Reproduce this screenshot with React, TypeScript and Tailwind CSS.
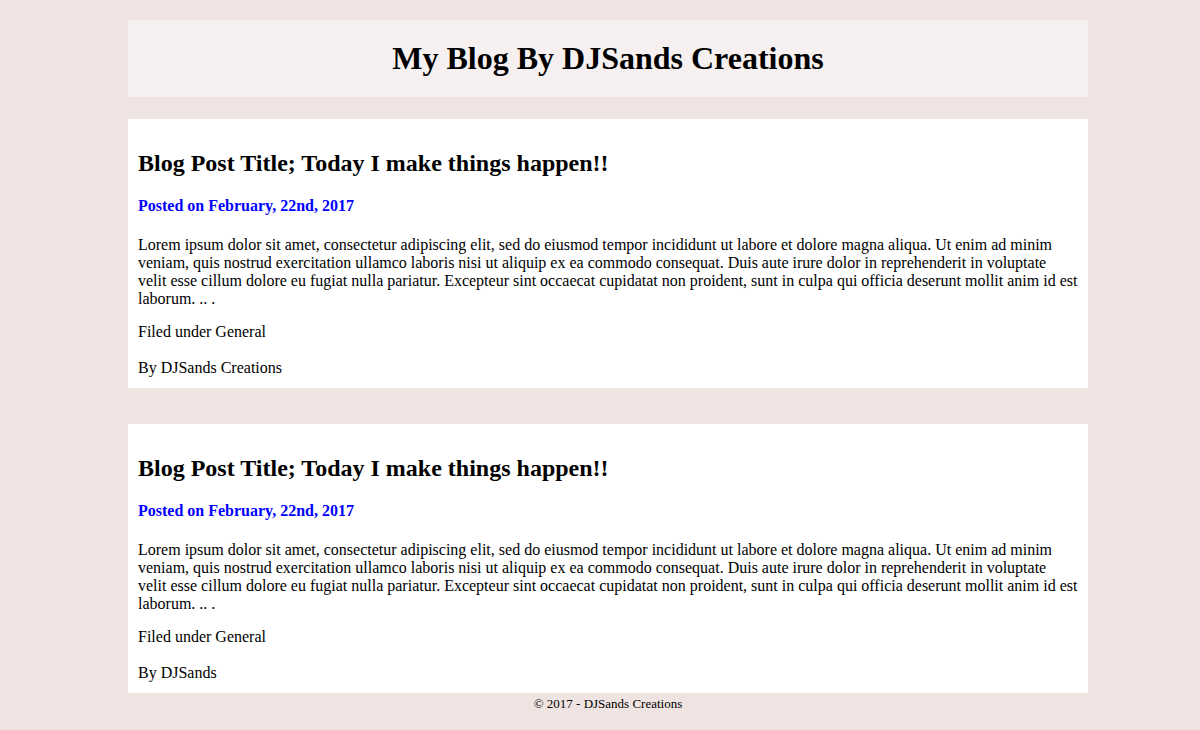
const posts = [
  { id: 1, author: 'By DJSands Creations' },
  { id: 2, author: 'By DJSands' },
]

const lorem =
  'Lorem ipsum dolor sit amet, consectetur adipiscing elit, sed do eiusmod tempor incididunt ut labore et dolore magna aliqua. Ut enim ad minim veniam, quis nostrud exercitation ullamco laboris nisi ut aliquip ex ea commodo consequat. Duis aute irure dolor in reprehenderit in voluptate velit esse cillum dolore eu fugiat nulla pariatur. Excepteur sint occaecat cupidatat non proident, sunt in culpa qui officia deserunt mollit anim id est laborum. .. .'

function Post({ author }: { author: string }) {
  return (
    <article className="bg-white px-[10px] pt-[30px] pb-[11px]">
      {/* Title */}
      <h2 className="text-[24px] leading-[28px] font-bold text-black">
        Blog Post Title; Today I make things happen!!
      </h2>
      <h4 className="mt-[20px] text-[16px] leading-[18px] font-bold text-[#0000ff]">
        Posted on February, 22nd, 2017
      </h4>

      {/* Body */}
      <p className="mt-[21px] text-[16px] leading-[18px] text-black">{lorem}</p>
      <p className="mt-[15px] text-[16px] leading-[18px] text-black">Filed under General</p>
      <p className="mt-[18px] text-[16px] leading-[18px] text-black">{author}</p>
    </article>
  )
}

export default function App() {
  return (
    <div
      className="min-h-[730px] bg-[#efe4e2] pt-[20px] pl-[16px]"
      style={{ fontFamily: '"Liberation Serif", "Times New Roman", serif' }}
    >
      <div className="w-[960px] mx-auto flex flex-col">
        {/* Header */}
        <header className="h-[77px] bg-[#f6f1f0] flex items-center justify-center">
          <h1 className="text-[32px] leading-[37px] font-bold text-black">My Blog By DJSands Creations</h1>
        </header>

        {/* Posts */}
        <div className="mt-[22px] flex flex-col gap-[36px]">
          {posts.map((post) => (
            <Post key={post.id} author={post.author} />
          ))}
        </div>

        {/* Footer */}
        <footer className="pt-[3px] text-center text-[13px] leading-[15px] text-black">
          © 2017 - DJSands Creations
        </footer>
      </div>
    </div>
  )
}
